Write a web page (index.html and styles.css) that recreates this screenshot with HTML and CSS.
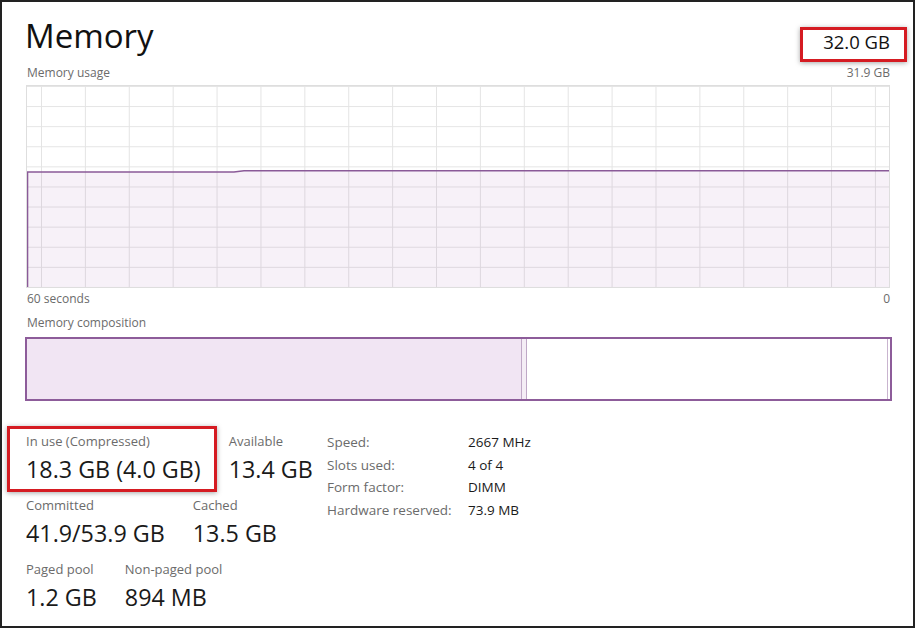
FILE: index.html
```html
<!DOCTYPE html>
<html lang="en">
<head>
    <meta charset="UTF-8">
    <title>Memory</title>
    <link rel="stylesheet" href="styles.css">
</head>
<body>
    <div class="window">
        <div class="head">
            <h1>Memory</h1>
            <div class="total"><span class="mark mark-total">32.0 GB</span></div>
        </div>
        <div class="caption caption-usage">
            <span>Memory usage</span>
            <span>31.9 GB</span>
        </div>
        <div class="graph">
            <svg class="graph-line" width="862" height="201" viewBox="0 0 862 201">
                <path d="M0.5 201 L0.5 86 L207 86 L217 84.8 L862 84.8 L862 201 Z" fill="rgba(135,60,155,0.07)" />
                <path d="M0.5 201 L0.5 86 L207 86 L217 84.8 L862 84.8" fill="none" stroke="#8a5a98" stroke-width="1.6" />
            </svg>
        </div>
        <div class="caption caption-axis">
            <span>60 seconds</span>
            <span>0</span>
        </div>
        <div class="caption caption-comp">Memory composition</div>
        <div class="comp">
            <div class="seg seg-inuse"></div>
            <div class="seg seg-modified"></div>
            <div class="seg seg-standby"></div>
            <div class="seg seg-free"></div>
        </div>
        <div class="stats">
            <div class="stat-rows">
                <div class="stat-row">
                    <div class="stat mark mark-inuse">
                        <div class="stat-label">In use (Compressed)</div>
                        <div class="stat-value">18.3 GB (4.0 GB)</div>
                    </div>
                    <div class="stat">
                        <div class="stat-label">Available</div>
                        <div class="stat-value">13.4 GB</div>
                    </div>
                </div>
                <div class="stat-row">
                    <div class="stat">
                        <div class="stat-label">Committed</div>
                        <div class="stat-value">41.9/53.9 GB</div>
                    </div>
                    <div class="stat">
                        <div class="stat-label">Cached</div>
                        <div class="stat-value">13.5 GB</div>
                    </div>
                </div>
                <div class="stat-row">
                    <div class="stat">
                        <div class="stat-label">Paged pool</div>
                        <div class="stat-value">1.2 GB</div>
                    </div>
                    <div class="stat">
                        <div class="stat-label">Non-paged pool</div>
                        <div class="stat-value">894 MB</div>
                    </div>
                </div>
            </div>
            <dl class="specs">
                <dt>Speed:</dt><dd>2667 MHz</dd>
                <dt>Slots used:</dt><dd>4 of 4</dd>
                <dt>Form factor:</dt><dd>DIMM</dd>
                <dt>Hardware reserved:</dt><dd>73.9 MB</dd>
            </dl>
        </div>
    </div>
</body>
</html>
```

FILE: styles.css
```css
html, body {
    margin: 0;
    background: #fff;
}
body {
    font-family: "Open Sans", "Noto Sans", sans-serif;
    color: #1a1a1a;
}
.window {
    box-sizing: border-box;
    width: 915px;
    height: 628px;
    border: 2px solid #222;
    padding: 14px 23px 0 24px;
    overflow: hidden;
}
.head {
    display: flex;
    justify-content: space-between;
    align-items: flex-start;
    height: 40px;
}
h1 {
    margin: 0 0 0 -1px;
    font-size: 33px;
    line-height: 40px;
    font-weight: 400;
    color: #111;
}
.total {
    margin-top: 14px;
    font-size: 18.5px;
    line-height: 24px;
    color: #111;
}
.mark {
    display: block;
    border: 3px solid #d51b22;
    box-shadow: 0 1px 5px rgba(0, 0, 0, 0.35);
    background: #fff;
}
.mark-total {
    padding: 0 14px 5px 20px;
    margin: -3px -17px -8px -23px;
}
.caption {
    display: flex;
    justify-content: space-between;
    font-size: 12px;
    line-height: 16px;
    color: #6b6b6b;
    padding: 0 0 0 1px;
}
.caption-usage {
    margin-top: 9px;
}
.caption-axis {
    margin-top: 3px;
}
.caption-comp {
    margin-top: 8px;
}
.graph {
    margin-top: 4px;
    height: 201px;
    border: 1px solid #dedede;
    background-color: #fff;
    background-image:
        linear-gradient(to right, #e4e4e4 1px, transparent 1px),
        linear-gradient(to bottom, #e4e4e4 1px, transparent 1px);
    background-size: 43.9px 100%, 100% 20.1px;
    background-position: 14px 0, 0 0;
}
.graph-line {
    display: block;
}
.comp {
    display: flex;
    margin: 6px -2px 0 -1px;
    height: 60px;
    border: 2px solid #8d5c9a;
}
.seg-inuse {
    flex: 0 0 494px;
    background: #f1e5f3;
}
.seg-modified {
    flex: 0 0 4px;
    background: #f4edf5;
    border-left: 1px solid #bfa8c6;
    border-right: 1px solid #bfa8c6;
}
.seg-standby {
    flex: 1;
    background: #fff;
}
.seg-free {
    flex: 0 0 2px;
    border-left: 1px solid #c9b4cf;
}
.stats {
    display: grid;
    grid-template-columns: 301px auto;
    align-items: start;
    margin-top: 31px;
}
.stat-rows {
    display: flex;
    flex-direction: column;
    gap: 12px;
}
.stat-row {
    display: flex;
    gap: 28px;
}
.stat-label {
    font-size: 13px;
    line-height: 18px;
    color: #6b6b6b;
}
.stat-value {
    margin-top: 4px;
    font-size: 23.3px;
    line-height: 30px;
    color: #1a1a1a;
}
.mark-inuse {
    padding: 3px 13px 5px 16px;
    margin: -6px -16px -8px -19px;
}
.specs {
    display: grid;
    grid-template-columns: 141px auto;
    align-content: start;
    margin: -1px 0 0 0;
    font-size: 13.5px;
    line-height: 22.7px;
}
.specs dt {
    color: #6b6b6b;
}
.specs dd {
    margin: 0;
    color: #1a1a1a;
}
```
